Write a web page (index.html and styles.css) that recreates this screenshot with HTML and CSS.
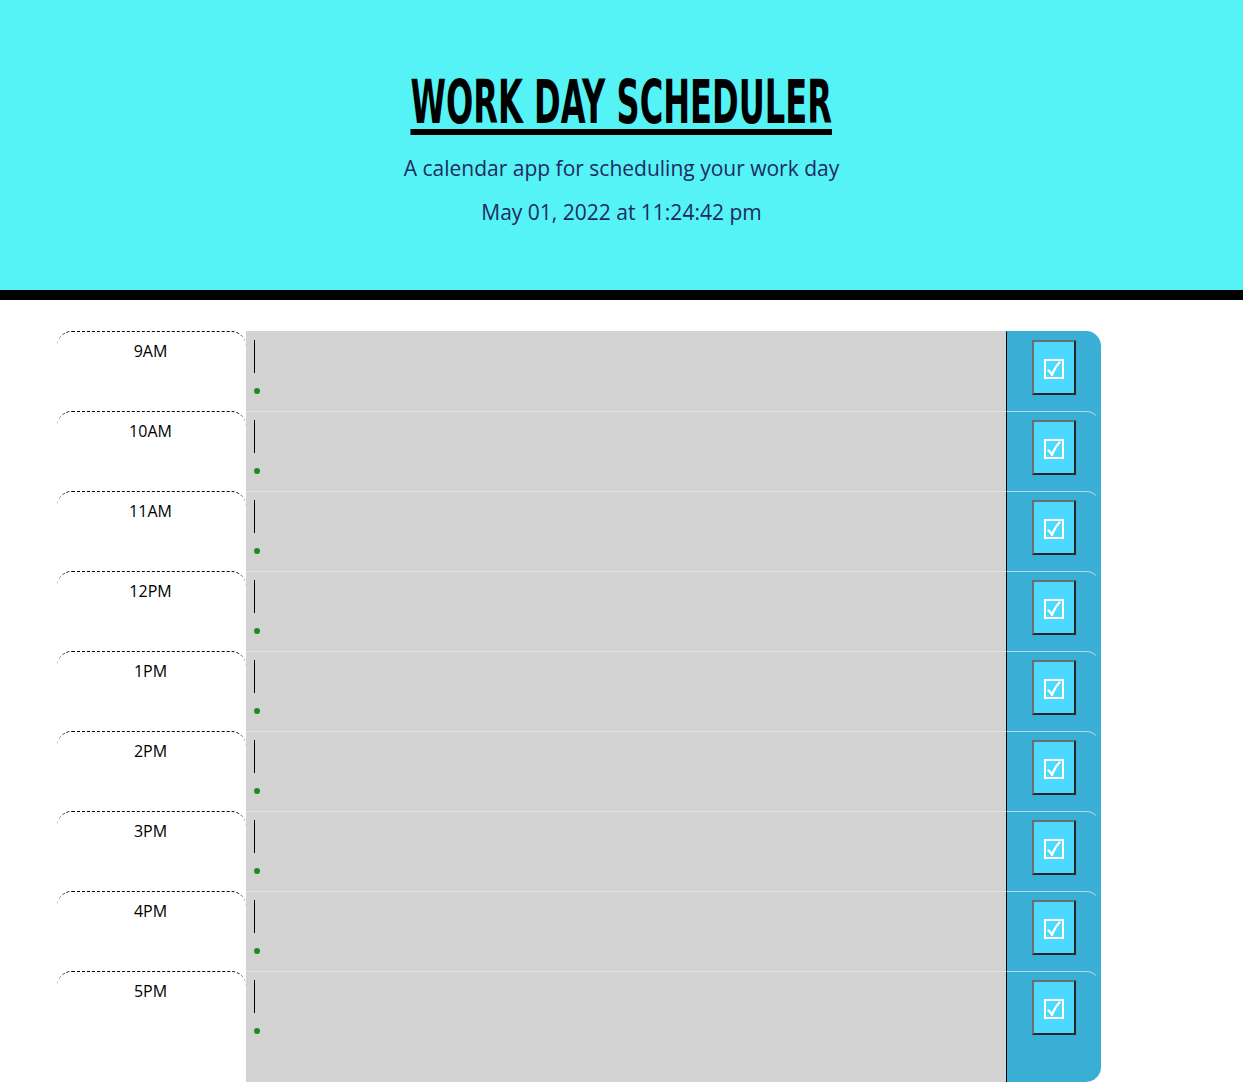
FILE: index.html
```html
<!DOCTYPE html>
<html lang="en">
<head>
<meta charset="utf-8">
<title>Work Day Scheduler</title>
<link rel="stylesheet" href="styles.css">
</head>
<body>
<header class="jumbotron">
  <h1 class="title"><span class="title-text">Work Day Scheduler</span></h1>
  <p class="lead">A calendar app for scheduling your work day</p>
  <p class="lead date">May 01, 2022 at 11:24:42 pm</p>
</header>
<main class="schedule">
  <div class="time-block">
    <div class="hour">9AM</div>
    <div class="description"><span class="caret"></span><span class="dot"></span></div>
    <div class="save-cell"><button class="save-btn" aria-label="Save"><svg class="check" viewBox="0 0 20 20" width="20" height="20"><rect x="1" y="1" width="18" height="18" fill="none" stroke="#fff" stroke-width="2"/><path d="M4.5 11.5 Q6.5 12.5 8 16 Q11 8 15.5 3.5" fill="none" stroke="#fff" stroke-width="2.4" stroke-linecap="round" stroke-linejoin="round"/></svg></button></div>
  </div>
  <div class="time-block">
    <div class="hour">10AM</div>
    <div class="description"><span class="caret"></span><span class="dot"></span></div>
    <div class="save-cell"><button class="save-btn" aria-label="Save"><svg class="check" viewBox="0 0 20 20" width="20" height="20"><rect x="1" y="1" width="18" height="18" fill="none" stroke="#fff" stroke-width="2"/><path d="M4.5 11.5 Q6.5 12.5 8 16 Q11 8 15.5 3.5" fill="none" stroke="#fff" stroke-width="2.4" stroke-linecap="round" stroke-linejoin="round"/></svg></button></div>
  </div>
  <div class="time-block">
    <div class="hour">11AM</div>
    <div class="description"><span class="caret"></span><span class="dot"></span></div>
    <div class="save-cell"><button class="save-btn" aria-label="Save"><svg class="check" viewBox="0 0 20 20" width="20" height="20"><rect x="1" y="1" width="18" height="18" fill="none" stroke="#fff" stroke-width="2"/><path d="M4.5 11.5 Q6.5 12.5 8 16 Q11 8 15.5 3.5" fill="none" stroke="#fff" stroke-width="2.4" stroke-linecap="round" stroke-linejoin="round"/></svg></button></div>
  </div>
  <div class="time-block">
    <div class="hour">12PM</div>
    <div class="description"><span class="caret"></span><span class="dot"></span></div>
    <div class="save-cell"><button class="save-btn" aria-label="Save"><svg class="check" viewBox="0 0 20 20" width="20" height="20"><rect x="1" y="1" width="18" height="18" fill="none" stroke="#fff" stroke-width="2"/><path d="M4.5 11.5 Q6.5 12.5 8 16 Q11 8 15.5 3.5" fill="none" stroke="#fff" stroke-width="2.4" stroke-linecap="round" stroke-linejoin="round"/></svg></button></div>
  </div>
  <div class="time-block">
    <div class="hour">1PM</div>
    <div class="description"><span class="caret"></span><span class="dot"></span></div>
    <div class="save-cell"><button class="save-btn" aria-label="Save"><svg class="check" viewBox="0 0 20 20" width="20" height="20"><rect x="1" y="1" width="18" height="18" fill="none" stroke="#fff" stroke-width="2"/><path d="M4.5 11.5 Q6.5 12.5 8 16 Q11 8 15.5 3.5" fill="none" stroke="#fff" stroke-width="2.4" stroke-linecap="round" stroke-linejoin="round"/></svg></button></div>
  </div>
  <div class="time-block">
    <div class="hour">2PM</div>
    <div class="description"><span class="caret"></span><span class="dot"></span></div>
    <div class="save-cell"><button class="save-btn" aria-label="Save"><svg class="check" viewBox="0 0 20 20" width="20" height="20"><rect x="1" y="1" width="18" height="18" fill="none" stroke="#fff" stroke-width="2"/><path d="M4.5 11.5 Q6.5 12.5 8 16 Q11 8 15.5 3.5" fill="none" stroke="#fff" stroke-width="2.4" stroke-linecap="round" stroke-linejoin="round"/></svg></button></div>
  </div>
  <div class="time-block">
    <div class="hour">3PM</div>
    <div class="description"><span class="caret"></span><span class="dot"></span></div>
    <div class="save-cell"><button class="save-btn" aria-label="Save"><svg class="check" viewBox="0 0 20 20" width="20" height="20"><rect x="1" y="1" width="18" height="18" fill="none" stroke="#fff" stroke-width="2"/><path d="M4.5 11.5 Q6.5 12.5 8 16 Q11 8 15.5 3.5" fill="none" stroke="#fff" stroke-width="2.4" stroke-linecap="round" stroke-linejoin="round"/></svg></button></div>
  </div>
  <div class="time-block">
    <div class="hour">4PM</div>
    <div class="description"><span class="caret"></span><span class="dot"></span></div>
    <div class="save-cell"><button class="save-btn" aria-label="Save"><svg class="check" viewBox="0 0 20 20" width="20" height="20"><rect x="1" y="1" width="18" height="18" fill="none" stroke="#fff" stroke-width="2"/><path d="M4.5 11.5 Q6.5 12.5 8 16 Q11 8 15.5 3.5" fill="none" stroke="#fff" stroke-width="2.4" stroke-linecap="round" stroke-linejoin="round"/></svg></button></div>
  </div>
  <div class="time-block last">
    <div class="hour">5PM</div>
    <div class="description"><span class="caret"></span><span class="dot"></span></div>
    <div class="save-cell"><button class="save-btn" aria-label="Save"><svg class="check" viewBox="0 0 20 20" width="20" height="20"><rect x="1" y="1" width="18" height="18" fill="none" stroke="#fff" stroke-width="2"/><path d="M4.5 11.5 Q6.5 12.5 8 16 Q11 8 15.5 3.5" fill="none" stroke="#fff" stroke-width="2.4" stroke-linecap="round" stroke-linejoin="round"/></svg></button></div>
  </div>
</main>
</body>
</html>
```

FILE: styles.css
```css
* { box-sizing: border-box; }

body {
  margin: 0;
  background: #ffffff;
  font-family: "Open Sans", "DejaVu Sans", sans-serif;
  color: #000;
}

.jumbotron {
  height: 300px;
  background: #55f3f5;
  border-bottom: 10px solid #000;
  padding-top: 72px;
  text-align: center;
}

.title {
  margin: 0;
  font-family: "DejaVu Sans Condensed", "DejaVu Sans", sans-serif;
  font-weight: bold;
  font-size: 60px;
  line-height: 60px;
  height: 60px;
  text-transform: uppercase;
  color: #000;
}

.title-text {
  display: inline-block;
  transform: scaleX(0.595);
  transform-origin: center;
  text-decoration: underline;
  text-decoration-thickness: 6px;
  text-underline-offset: 6px;
  white-space: nowrap;
}

.lead {
  margin: 22px 0 0;
  font-size: 21px;
  line-height: 29px;
  color: #1f2b5e;
}

.lead.date {
  margin-top: 15px;
}

.schedule {
  width: 1044px;
  margin: 31px 0 0 57px;
}

.time-block {
  display: flex;
  height: 80px;
}

.time-block.last {
  height: 111px;
}

.hour {
  width: 189px;
  flex: none;
  background: #fff;
  border-top: 1px dashed #000;
  border-radius: 15px 15px 0 0;
  text-align: center;
  font-size: 16px;
  line-height: 24px;
  padding: 7px 2px 0 0;
  color: #000;
}

.description {
  width: 761px;
  flex: none;
  background: #d3d3d3;
  border-top: 1px solid #e4e4e4;
  border-right: 1px solid #000;
  padding: 8px 0 0 8px;
  display: flex;
  flex-direction: column;
}

.time-block:first-child .description {
  border-top-color: #d3d3d3;
}

.caret {
  width: 1px;
  height: 33px;
  background: #000;
}

.dot {
  width: 6px;
  height: 6px;
  border-radius: 50%;
  background: #1f8a1f;
  margin: 15px 0 0 0;
}

.save-cell {
  flex: 1;
  position: relative;
  background: #3aafd6;
  padding-top: 9px;
  display: flex;
  justify-content: center;
  align-items: flex-start;
}

.save-cell::before {
  content: "";
  position: absolute;
  top: 0;
  left: 0;
  right: 0;
  height: 15px;
  border-top: 1px solid #a9dcee;
  border-right: 1px solid transparent;
  border-top-right-radius: 15px;
}

.time-block:first-child .save-cell {
  border-top-right-radius: 15px;
}

.time-block:first-child .save-cell::before {
  display: none;
}

.time-block.last .save-cell {
  border-bottom-right-radius: 15px;
}

.save-btn {
  width: 44px;
  height: 55px;
  margin-left: -1px;
  padding: 3px 0 0;
  background: #4dd9ff;
  border: 2px solid;
  border-color: #6e6e6e #262626 #262626 #6e6e6e;
  display: flex;
  align-items: center;
  justify-content: center;
  cursor: pointer;
}

.check {
  display: block;
}
```
